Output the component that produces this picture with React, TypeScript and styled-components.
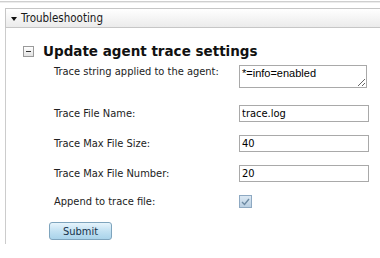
import styled, { createGlobalStyle } from 'styled-components'

const GlobalStyle = createGlobalStyle`
  html, body {
    margin: 0;
    padding: 0;
    background: #ffffff;
  }
  body {
    font-family: 'DejaVu Sans Condensed', 'DejaVu Sans', sans-serif;
    color: #000000;
  }
`

const Page = styled('div')`
  width: 380px;
  height: 258px;
  overflow: hidden;
  padding-top: 1px;
  box-sizing: border-box;
`

const TopRule = styled('div')`
  height: 1px;
  background: #cfcfcf;
  border-bottom: 1px solid #ececec;
`

const Panel = styled('section')`
  margin: 5px 0 0 5px;
`

const PanelHeader = styled('div')`
  display: flex;
  align-items: center;
  gap: 4px;
  height: 18px;
  padding-left: 5px;
  border: 1px solid #c6c6c6;
  border-right: none;
  background: linear-gradient(#ffffff, #f7f7f7 40%, #ebebeb);
  font-size: 11.5px;
  color: #1a1a1a;
`

const Caret = styled('span')`
  width: 0;
  height: 0;
  border-left: 3px solid transparent;
  border-right: 3px solid transparent;
  border-top: 4px solid #111111;
  margin-top: 1px;
`

const PanelBody = styled('div')`
  border-left: 1px solid #cccccc;
  padding: 15px 0 4px 17px;
`

const SectionTitle = styled('div')`
  display: flex;
  align-items: center;
  gap: 9px;
  font-family: 'DejaVu Sans', sans-serif;
  font-weight: bold;
  font-size: 13.5px;
  color: #111111;
`

const Toggle = styled('span')`
  position: relative;
  width: 9px;
  height: 9px;
  border: 1px solid #9a9a9a;
  background: linear-gradient(#ffffff, #e2e2e2);

  &::after {
    content: '';
    position: absolute;
    left: 2px;
    right: 2px;
    top: 4px;
    height: 1px;
    background: #333333;
  }
`

const Form = styled('div')`
  display: grid;
  grid-template-columns: 185px 130px;
  row-gap: 13px;
  align-items: center;
  margin: 6px 0 0 31px;
  font-size: 11px;
`

const Label = styled('label')<{ $top?: boolean }>`
  color: #222222;
  align-self: ${({ $top }) => ($top ? 'start' : 'center')};
`

const TextArea = styled('textarea')`
  width: 128px;
  height: 23px;
  box-sizing: border-box;
  margin: 0 0 4px 0;
  padding: 1px 2px;
  border: 1px solid #a9a9a9;
  font-family: 'Liberation Sans', Arial, sans-serif;
  font-size: 11px;
  resize: both;
  overflow: hidden;
`

const TextInput = styled('input')`
  width: 130px;
  height: 17px;
  box-sizing: border-box;
  margin: 0;
  padding: 0 2px;
  border: 1px solid #a9a9a9;
  font-family: 'DejaVu Sans Condensed', 'DejaVu Sans', sans-serif;
  font-size: 11px;
  color: #000000;
`

const Check = styled('span')`
  display: flex;
  align-items: center;
  justify-content: center;
  width: 11px;
  height: 11px;
  border: 1px solid #8ea9c2;
  background: linear-gradient(#dbe8f3, #b9cfe2);

  svg {
    display: block;
  }
`

const SubmitButton = styled('button')`
  width: 63px;
  height: 18px;
  margin: 14px 0 0 26px;
  padding: 0;
  border: 1px solid #7ea4bd;
  border-radius: 3px;
  background: linear-gradient(#e6f4fc, #c2e1f2 50%, #a9d3ea);
  font-family: 'DejaVu Sans Condensed', 'DejaVu Sans', sans-serif;
  font-size: 11px;
  color: #16324a;
  display: block;
`

export default function App() {
  return (
    <Page>
      <GlobalStyle />
      <TopRule />
      <Panel>
        <PanelHeader>
          <Caret />
          <span>Troubleshooting</span>
        </PanelHeader>
        <PanelBody>
          <SectionTitle>
            <Toggle />
            <span>Update agent trace settings</span>
          </SectionTitle>
          <Form>
            <Label $top>Trace string applied to the agent:</Label>
            <TextArea defaultValue='*=info=enabled' />
            <Label>Trace File Name:</Label>
            <TextInput defaultValue='trace.log' />
            <Label>Trace Max File Size:</Label>
            <TextInput defaultValue='40' />
            <Label>Trace Max File Number:</Label>
            <TextInput defaultValue='20' />
            <Label>Append to trace file:</Label>
            <Check>
              <svg width='9' height='8' viewBox='0 0 9 8'>
                <path d='M1 4 L3.5 6.5 L8 1' fill='none' stroke='#6c8aa3' strokeWidth='1.4' />
              </svg>
            </Check>
          </Form>
          <SubmitButton type='button'>Submit</SubmitButton>
        </PanelBody>
      </Panel>
    </Page>
  )
}
